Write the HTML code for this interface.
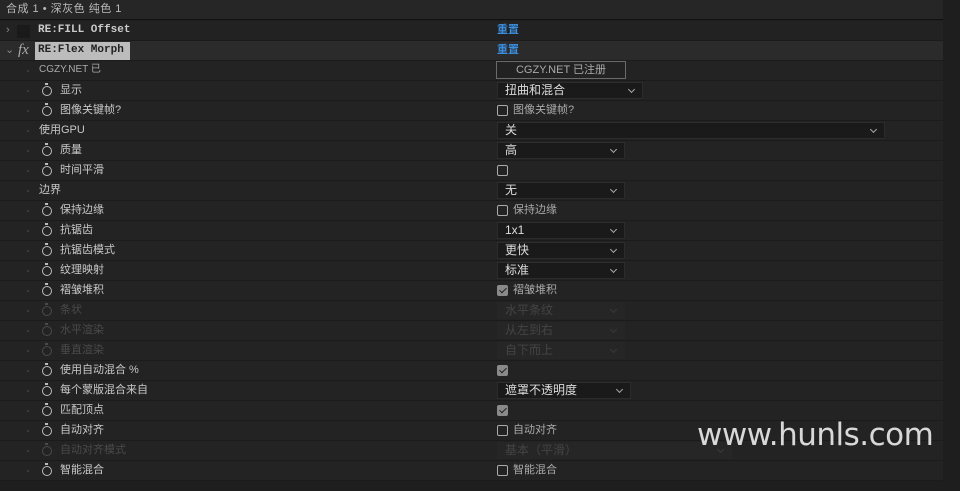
<html><head><style>
body{margin:0;width:960px;height:491px;background:#1e1e1e;font-family:"Liberation Sans","Noto Sans CJK SC",sans-serif;font-size:11px;color:#c8c8c8;overflow:hidden;position:relative}
.hdr{position:absolute;left:0;top:0;width:943px;height:19px;background:#262626;border-bottom:1px solid #111;}
.hdr span{position:absolute;left:6px;top:0;line-height:18px;font-size:11px;color:#bbb;letter-spacing:.5px}
.row{position:absolute;left:0;width:943px;height:19px;background:#232323;border-bottom:1px solid #1b1b1b}
.l{position:absolute;top:0;line-height:18px;white-space:nowrap}
.dot{position:absolute;left:27px;top:9px;width:2px;height:2px;background:#3a3a3a}
.sw{position:absolute;left:42px;top:5px;width:10px;height:10px;border:1.5px solid #bbb;border-radius:50%;box-sizing:border-box}
.sw:before{content:"";position:absolute;left:2px;top:-4px;width:3px;height:2px;background:#bbb}
.d .sw{border-color:#4a4a4a}.d .sw:before{background:#4a4a4a}
.d .l{color:#4a4a4a}
.dd{position:absolute;left:497px;top:1px;height:17px;background:#1a1a1a;border:1px solid #2c2c2c;box-sizing:border-box;color:#ddd;font-size:12px;padding-left:7px;line-height:15px}
.dd:after{content:"";position:absolute;right:8px;top:4px;width:4px;height:4px;border-right:1px solid #aaa;border-bottom:1px solid #aaa;transform:rotate(45deg)}
.d .dd{background:#262626;border-color:#262626;color:#444}.d .dd:after{border-color:#3a3a3a}
.cb{position:absolute;left:497px;top:4px;width:11px;height:11px;border:1px solid #aaa;border-radius:2px;box-sizing:border-box}
.cb.k{background:#8a8a8a;border-color:#8a8a8a}
.cb.k:after{content:"";position:absolute;left:3px;top:0px;width:3px;height:6px;border-right:1.5px solid #222;border-bottom:1.5px solid #222;transform:rotate(45deg)}
.cl{position:absolute;left:513px;top:0;line-height:18px;color:#aaa}
.blue{position:absolute;left:497px;top:0;line-height:18px;color:#3b8fe0;font-weight:bold}
</style></head><body>
<div class="hdr"><span>合成 1 • 深灰色 纯色 1</span></div>
<div class="row" style="top:21px;background:#222"><span class="l" style="left:6px;color:#888">›</span><div style="position:absolute;left:17px;top:4px;width:13px;height:13px;background:#1a1a1a"></div><span class="l" style="left:38px;font-weight:bold;font-family:'Liberation Mono',monospace;color:#ccc">RE:FILL Offset</span><span class="blue">重置</span></div>
<div class="row" style="top:41px;background:#2b2b2b"><span class="l" style="left:5px;color:#888">⌄</span><span class="l" style="left:18px;top:0;font-style:italic;font-size:15px;color:#aaa;font-family:'Liberation Serif',serif">fx</span><span style="position:absolute;left:35px;top:1px;height:18px;width:95px;background:#bcbcbc"></span><span class="l" style="left:38px;font-weight:bold;font-family:'Liberation Mono',monospace;color:#222">RE:Flex Morph</span><span class="blue">重置</span></div>
<div class="row" style="top:61px"><div class="dot"></div><span class="l" style="left:39px;font-size:10px;color:#aaa">CGZY.NET 已</span><div style="position:absolute;left:496px;top:0;width:130px;height:18px;border:1px solid #6a6a6a;box-sizing:border-box;background:#222;text-align:center;line-height:16px;color:#aaa;font-size:11px">CGZY.NET 已注册</div></div>
<div class="row" style="top:81px"><div class="dot"></div><div class="sw"></div><span class="l" style="left:60px">显示</span><div class="dd" style="width:146px">扭曲和混合</div></div>
<div class="row" style="top:101px"><div class="dot"></div><div class="sw"></div><span class="l" style="left:60px">图像关键帧?</span><div class="cb"></div><span class="cl">图像关键帧?</span></div>
<div class="row" style="top:121px"><div class="dot"></div><span class="l" style="left:39px">使用GPU</span><div class="dd" style="width:388px">关</div></div>
<div class="row" style="top:141px"><div class="dot"></div><div class="sw"></div><span class="l" style="left:60px">质量</span><div class="dd" style="width:128px">高</div></div>
<div class="row" style="top:161px"><div class="dot"></div><div class="sw"></div><span class="l" style="left:60px">时间平滑</span><div class="cb"></div></div>
<div class="row" style="top:181px"><div class="dot"></div><span class="l" style="left:39px">边界</span><div class="dd" style="width:128px">无</div></div>
<div class="row" style="top:201px"><div class="dot"></div><div class="sw"></div><span class="l" style="left:60px">保持边缘</span><div class="cb"></div><span class="cl">保持边缘</span></div>
<div class="row" style="top:221px"><div class="dot"></div><div class="sw"></div><span class="l" style="left:60px">抗锯齿</span><div class="dd" style="width:128px">1x1</div></div>
<div class="row" style="top:241px"><div class="dot"></div><div class="sw"></div><span class="l" style="left:60px">抗锯齿模式</span><div class="dd" style="width:128px">更快</div></div>
<div class="row" style="top:261px"><div class="dot"></div><div class="sw"></div><span class="l" style="left:60px">纹理映射</span><div class="dd" style="width:128px">标准</div></div>
<div class="row" style="top:281px"><div class="dot"></div><div class="sw"></div><span class="l" style="left:60px">褶皱堆积</span><div class="cb k"></div><span class="cl">褶皱堆积</span></div>
<div class="row d" style="top:301px"><div class="dot"></div><div class="sw"></div><span class="l" style="left:60px">条状</span><div class="dd" style="width:128px">水平条纹</div></div>
<div class="row d" style="top:321px"><div class="dot"></div><div class="sw"></div><span class="l" style="left:60px">水平渲染</span><div class="dd" style="width:128px">从左到右</div></div>
<div class="row d" style="top:341px"><div class="dot"></div><div class="sw"></div><span class="l" style="left:60px">垂直渲染</span><div class="dd" style="width:128px">自下而上</div></div>
<div class="row" style="top:361px"><div class="dot"></div><div class="sw"></div><span class="l" style="left:60px">使用自动混合 %</span><div class="cb k"></div></div>
<div class="row" style="top:381px"><div class="dot"></div><div class="sw"></div><span class="l" style="left:60px">每个蒙版混合来自</span><div class="dd" style="width:134px">遮罩不透明度</div></div>
<div class="row" style="top:401px"><div class="dot"></div><div class="sw"></div><span class="l" style="left:60px">匹配顶点</span><div class="cb k"></div></div>
<div class="row" style="top:421px"><div class="dot"></div><div class="sw"></div><span class="l" style="left:60px">自动对齐</span><div class="cb"></div><span class="cl">自动对齐</span></div>
<div class="row d" style="top:441px"><div class="dot"></div><div class="sw"></div><span class="l" style="left:60px">自动对齐模式</span><div class="dd" style="width:235px">基本（平滑）</div></div>
<div class="row" style="top:461px"><div class="dot"></div><div class="sw"></div><span class="l" style="left:60px">智能混合</span><div class="cb"></div><span class="cl">智能混合</span></div>
<div style="position:absolute;left:697px;top:417px;font-size:31px;color:#d8d8d8;font-family:'DejaVu Sans',sans-serif;letter-spacing:-0.5px">www.hunls.com</div>
</body></html>
